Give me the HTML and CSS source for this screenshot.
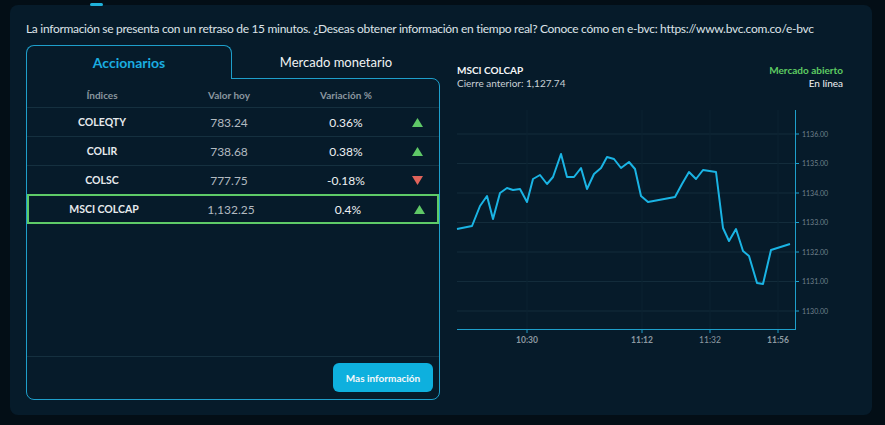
FILE: index.html
```html
<!DOCTYPE html>
<html lang="es">
<head>
<meta charset="utf-8">
<title>Mercado</title>
<link rel="stylesheet" href="styles.css">
</head>
<body>
<div class="top-indicator"></div>
<main class="panel">
  <p class="notice">La información se presenta con un retraso de 15 minutos. ¿Deseas obtener información en tiempo real? Conoce cómo en e-bvc: https://www.bvc.com.co/e-bvc</p>
  <div class="columns">
    <section class="left">
      <div class="tabs">
        <div class="tab active">Accionarios</div>
        <div class="tab">Mercado monetario</div>
      </div>
      <div class="box">
        <div class="table">
          <div class="row head">
            <span>Índices</span><span>Valor hoy</span><span>Variación %</span><span></span>
          </div>
          <div class="row">
            <span class="name">COLEQTY</span><span class="val">783.24</span><span class="var">0.36%</span>
            <span class="arrow"><svg width="11" height="9" viewBox="0 0 11 9"><polygon points="5.5,0 11,9 0,9" class="up"/></svg></span>
          </div>
          <div class="row">
            <span class="name">COLIR</span><span class="val">738.68</span><span class="var">0.38%</span>
            <span class="arrow"><svg width="11" height="9" viewBox="0 0 11 9"><polygon points="5.5,0 11,9 0,9" class="up"/></svg></span>
          </div>
          <div class="row">
            <span class="name">COLSC</span><span class="val">777.75</span><span class="var">-0.18%</span>
            <span class="arrow"><svg width="11" height="9" viewBox="0 0 11 9"><polygon points="0,0 11,0 5.5,9" class="down"/></svg></span>
          </div>
          <div class="row selected">
            <span class="name">MSCI COLCAP</span><span class="val">1,132.25</span><span class="var">0.4%</span>
            <span class="arrow"><svg width="11" height="9" viewBox="0 0 11 9"><polygon points="5.5,0 11,9 0,9" class="up"/></svg></span>
          </div>
        </div>
        <div class="footer">
          <button class="btn">Mas información</button>
        </div>
      </div>
    </section>
    <section class="right">
      <div class="chart-head">
        <div>
          <div class="c-title">MSCI COLCAP</div>
          <div class="c-sub">Cierre anterior: 1,127.74</div>
        </div>
        <div class="status">
          <div class="open">Mercado abierto</div>
          <div class="online">En línea</div>
        </div>
      </div>
      <svg class="chart" width="412" height="260" viewBox="448 100 412 260">
        <g class="grid">
          <line x1="457" y1="134" x2="795" y2="134"/>
          <line x1="457" y1="163.5" x2="795" y2="163.5"/>
          <line x1="457" y1="193" x2="795" y2="193"/>
          <line x1="457" y1="222.5" x2="795" y2="222.5"/>
          <line x1="457" y1="252" x2="795" y2="252"/>
          <line x1="457" y1="281.5" x2="795" y2="281.5"/>
          <line x1="457" y1="311" x2="795" y2="311"/>
          <line class="v" x1="527" y1="110" x2="527" y2="329"/>
          <line class="v" x1="642" y1="110" x2="642" y2="329"/>
          <line class="v" x1="710" y1="110" x2="710" y2="329"/>
          <line class="v" x1="778" y1="110" x2="778" y2="329"/>
        </g>
        <g class="axis">
          <line x1="795.5" y1="110" x2="795.5" y2="329.5"/>
          <line x1="457" y1="329.5" x2="796" y2="329.5"/>
          <line x1="527" y1="329" x2="527" y2="333"/>
          <line x1="642" y1="329" x2="642" y2="333"/>
          <line x1="710" y1="329" x2="710" y2="333"/>
          <line x1="778" y1="329" x2="778" y2="333"/>
          <line x1="795" y1="134" x2="799" y2="134"/>
          <line x1="795" y1="163.5" x2="799" y2="163.5"/>
          <line x1="795" y1="193" x2="799" y2="193"/>
          <line x1="795" y1="222.5" x2="799" y2="222.5"/>
          <line x1="795" y1="252" x2="799" y2="252"/>
          <line x1="795" y1="281.5" x2="799" y2="281.5"/>
          <line x1="795" y1="311" x2="799" y2="311"/>
        </g>
        <g class="ylab">
          <text x="802" y="136.5">1136.00</text>
          <text x="802" y="166">1135.00</text>
          <text x="802" y="195.5">1134.00</text>
          <text x="802" y="225">1133.00</text>
          <text x="802" y="254.5">1132.00</text>
          <text x="802" y="284">1131.00</text>
          <text x="802" y="313.5">1130.00</text>
        </g>
        <g class="xlab">
          <text x="527" y="343">10:30</text>
          <text x="642" y="343">11:12</text>
          <text x="710" y="343" class="light">11:32</text>
          <text x="778" y="343">11:56</text>
        </g>
        <polyline class="line" points="457,229 472,226 480,206 487,196 493,219 500,193 507,188 513,190 520,189 527,202 533,179 540,175 547,184 553,177 561,154 567,177 574,177 581,168 587,189 594,174 601,168 607,157 614,159 621,168 629,162 635,169 641,196 648,202 675,197 682,184 689,172 696,179 703,170 716,172 723,228 729,241 736,229 743,251 749,256 757,283 763,284 771,250 790,244"/>
      </svg>
    </section>
  </div>
</main>
</body>
</html>
```

FILE: styles.css
```css
* { box-sizing: border-box; }
html, body { margin: 0; padding: 0; }
body {
  background: #030e16;
  font-family: Lato, "Noto Sans", sans-serif;
  color: #e4e9ed;
  width: 885px;
  height: 425px;
  overflow: hidden;
  padding: 5px 13px 10px 10px;
  position: relative;
}
.top-indicator {
  position: absolute;
  left: 90px;
  top: 3px;
  width: 13px;
  height: 3px;
  border-radius: 2px;
  background: #1fb3dc;
}
.panel {
  background: #061b2a;
  border-radius: 8px;
  height: 410px;
  width: 862px;
  padding: 16px 12px 0 16px;
}
.notice {
  margin: 0;
  font-size: 12px;
  letter-spacing: -0.3px;
  line-height: 16px;
  color: #dde3e8;
  white-space: nowrap;
}
.columns {
  display: flex;
  margin-top: 8px;
  gap: 8px;
}
.left {
  width: 414px;
  display: flex;
  flex-direction: column;
}
.tabs {
  display: flex;
  height: 33px;
}
.tab {
  display: flex;
  align-items: center;
  justify-content: center;
  font-size: 13px;
  color: #f0f3f5;
  flex: 1;
}
.tab.active {
  flex: 0 0 206px;
  font-size: 14px;
  color: #1aade0;
  font-weight: 700;
  border: 1px solid #1e9fcb;
  border-bottom: none;
  border-radius: 8px 8px 0 0;
  background: #061b2a;
  position: relative;
  z-index: 1;
  height: 34px;
}
.box {
  border: 1px solid #1e9fcb;
  border-radius: 0 8px 8px 8px;
  height: 322px;
  display: flex;
  flex-direction: column;
}
.table { flex: 1; }
.row {
  display: grid;
  grid-template-columns: 150px 104px 130px 1fr;
  align-items: center;
  height: 29px;
  border-bottom: 1px solid #15303f;
  text-align: center;
}
.row.head {
  font-size: 10px;
  font-weight: 700;
  color: #8a969f;
  padding-top: 4px;
}
.name { font-size: 10.5px; font-weight: 700; color: #e6eaed; }
.val { font-size: 12px; color: #b2bac0; }
.var { font-size: 12px; color: #eef1f3; }
.arrow { display: flex; justify-content: flex-start; padding-left: 1px; }
.arrow svg { display: block; }
.up { fill: #5fc867; }
.down { fill: #e0635a; }
.row.selected {
  border: 2px solid #5ecb68;
  height: 30px;
  margin-top: -1px;
}
.footer {
  border-top: 1px solid #15303f;
  height: 43px;
  display: flex;
  justify-content: flex-end;
  align-items: flex-start;
  padding: 6px 6px 0 0;
}
.btn {
  width: 100px;
  height: 29px;
  border: none;
  border-radius: 6px;
  background: #0eb0de;
  color: #f4f8fa;
  font-family: inherit;
  font-weight: 700;
  font-size: 10px;
}
.right {
  flex: 1;
  display: flex;
  flex-direction: column;
}
.chart-head {
  display: flex;
  justify-content: space-between;
  padding: 19px 17px 0 9px;
  font-size: 10px;
  line-height: 13px;
}
.c-title { font-weight: 700; color: #f4f6f8; }
.c-sub { color: #c9d0d5; }
.status { text-align: right; }
.open { color: #5ecb62; font-weight: 700; }
.online { color: #f1f4f6; }
.chart {
  display: block;
  margin-top: 10px;
}
.grid line { stroke: #132c3b; stroke-width: 1; }
.grid line.v { stroke: #0b2231; }
.axis line { stroke: #1e9fcb; stroke-width: 1; }
.ylab text { font-size: 7px; fill: #6f808b; font-family: Lato, sans-serif; }
.xlab text { font-size: 8.5px; fill: #8d99a1; font-weight: 700; text-anchor: middle; font-family: Lato, sans-serif; }
.xlab text.light { font-weight: 400; }
.line { fill: none; stroke: #1ab4e4; stroke-width: 2; stroke-linejoin: round; }
```
